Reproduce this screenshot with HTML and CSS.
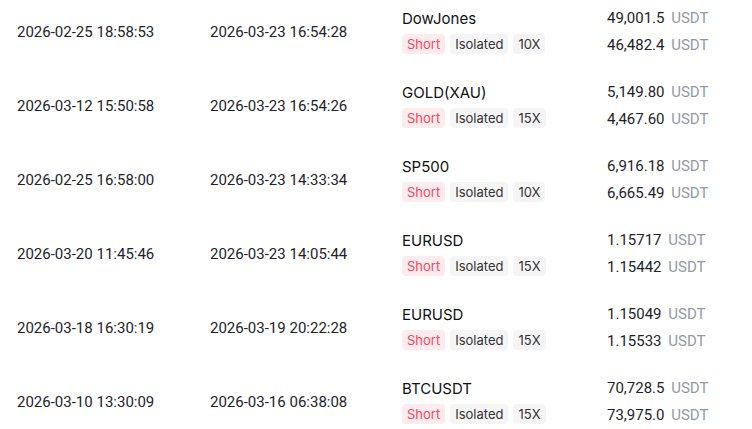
FILE: index.html
```html
<!DOCTYPE html>
<html lang="en">
<head>
  <meta charset="UTF-8" />
  <meta name="viewport" content="width=device-width, initial-scale=1" />
  <title>Position History</title>
  <link rel="stylesheet" href="styles.css">
</head>
<body>
  <div class="history">
    <div class="row">
      <div class="time">2026-02-25 18:58:53</div>
      <div class="time">2026-03-23 16:54:28</div>
      <div class="pair">
        <div class="symbol">DowJones</div>
        <div class="tags"><span class="tag short">Short</span><span class="tag">Isolated</span><span class="tag">10X</span></div>
      </div>
      <div class="prices">
        <div class="price">49,001.5 <span class="unit">USDT</span></div>
        <div class="price">46,482.4 <span class="unit">USDT</span></div>
      </div>
    </div>

    <div class="row">
      <div class="time">2026-03-12 15:50:58</div>
      <div class="time">2026-03-23 16:54:26</div>
      <div class="pair">
        <div class="symbol">GOLD(XAU)</div>
        <div class="tags"><span class="tag short">Short</span><span class="tag">Isolated</span><span class="tag">15X</span></div>
      </div>
      <div class="prices">
        <div class="price">5,149.80 <span class="unit">USDT</span></div>
        <div class="price">4,467.60 <span class="unit">USDT</span></div>
      </div>
    </div>

    <div class="row">
      <div class="time">2026-02-25 16:58:00</div>
      <div class="time">2026-03-23 14:33:34</div>
      <div class="pair">
        <div class="symbol">SP500</div>
        <div class="tags"><span class="tag short">Short</span><span class="tag">Isolated</span><span class="tag">10X</span></div>
      </div>
      <div class="prices">
        <div class="price">6,916.18 <span class="unit">USDT</span></div>
        <div class="price">6,665.49 <span class="unit">USDT</span></div>
      </div>
    </div>

    <div class="row">
      <div class="time">2026-03-20 11:45:46</div>
      <div class="time">2026-03-23 14:05:44</div>
      <div class="pair">
        <div class="symbol">EURUSD</div>
        <div class="tags"><span class="tag short">Short</span><span class="tag">Isolated</span><span class="tag">15X</span></div>
      </div>
      <div class="prices">
        <div class="price">1.15717 <span class="unit">USDT</span></div>
        <div class="price">1.15442 <span class="unit">USDT</span></div>
      </div>
    </div>

    <div class="row">
      <div class="time">2026-03-18 16:30:19</div>
      <div class="time">2026-03-19 20:22:28</div>
      <div class="pair">
        <div class="symbol">EURUSD</div>
        <div class="tags"><span class="tag short">Short</span><span class="tag">Isolated</span><span class="tag">15X</span></div>
      </div>
      <div class="prices">
        <div class="price">1.15049 <span class="unit">USDT</span></div>
        <div class="price">1.15533 <span class="unit">USDT</span></div>
      </div>
    </div>

    <div class="row">
      <div class="time">2026-03-10 13:30:09</div>
      <div class="time">2026-03-16 06:38:08</div>
      <div class="pair">
        <div class="symbol">BTCUSDT</div>
        <div class="tags"><span class="tag short">Short</span><span class="tag">Isolated</span><span class="tag">15X</span></div>
      </div>
      <div class="prices">
        <div class="price">70,728.5 <span class="unit">USDT</span></div>
        <div class="price">73,975.0 <span class="unit">USDT</span></div>
      </div>
    </div>
  </div>
</body>
</html>
```

FILE: styles.css
```css
body {
  margin: 0;
  padding: 0;
  background: #fff;
  color: #1e2329;
  font-family: Roboto, 'Liberation Sans', sans-serif;
  overflow: hidden;
}

.history {
  padding-left: 17px;
}

.row {
  display: grid;
  grid-template-columns: 193px 192px 205px auto;
  align-items: center;
  height: 74px;
  box-sizing: border-box;
  padding: 8px 0 20px;
}

.time {
  font-size: 15px;
  line-height: 20px;
  color: #1e2329;
}

.pair {
  display: flex;
  flex-direction: column;
  gap: 5px;
}

.symbol {
  font-family: Inter, 'Noto Sans', sans-serif;
  font-size: 15px;
  font-weight: 400;
  line-height: 20px;
  color: #111;
}

.tags {
  display: flex;
  gap: 5px;
}

.tag {
  font-family: Inter, 'Noto Sans', sans-serif;
  font-size: 13px;
  line-height: 20px;
  height: 20px;
  padding: 0 5px;
  border-radius: 4px;
  background: #f5f5f5;
  color: #333;
}

.tag.short {
  background: #fdebed;
  color: #f6465d;
}

.prices {
  display: flex;
  flex-direction: column;
  gap: 7px;
}

.price {
  font-size: 15px;
  line-height: 20px;
  color: #1e2329;
}

.unit {
  color: #929aa5;
  margin-left: 3px;
}
```
